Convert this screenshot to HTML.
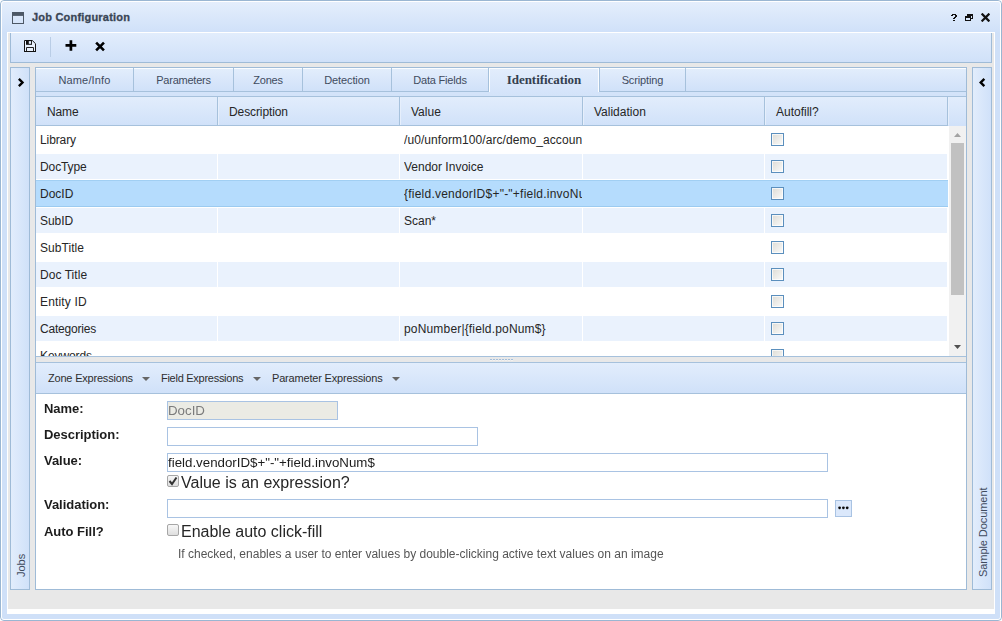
<!DOCTYPE html>
<html>
<head>
<meta charset="utf-8">
<title>Job Configuration</title>
<style>
*{box-sizing:border-box;margin:0;padding:0}
html,body{width:1002px;height:621px;overflow:hidden;background:#fff;font-family:"Liberation Sans",sans-serif;font-size:12px;color:#222}
div,svg{position:absolute}
.g{background:linear-gradient(#e2edfc,#d0e1f9)}
.t{white-space:nowrap;color:#2a2a2a}
.tab{top:68px;height:23px;line-height:25px;text-align:center;font-size:11px;color:#3f4b5e;white-space:nowrap}
.ts{top:68px;width:1px;height:23px;background:#a6c1dc}
.ch{top:97px;height:28px;line-height:31px;font-size:12px;color:#262626;white-space:nowrap}
.cs{top:97px;width:1px;height:28px;background:#a6c1dc}
.cw{top:97px;width:1px;height:28px;background:#e6effc}
.row{left:36px;width:912px;height:27px;background:#fff}
.alt{background:#eaf2fd;border-top:1px solid #fff;border-bottom:1px solid #fff;width:911px}
.sel{background:#b5dcfd;border-top:1px solid #a1cff3;border-bottom:1px solid #9ccbf0}
.c{top:0;height:27px;line-height:29px;font-size:12px;color:#262626;white-space:nowrap;overflow:hidden}
.alt .c,.sel .c{top:-1px}
.v{top:0;width:1px;height:27px;background:#fff}
.alt .v{top:-1px}
.cb{left:735px;top:7px;width:13px;height:13px;border:1px solid #5b8fbd;background:linear-gradient(135deg,#dddcd6,#fbfbfa);box-shadow:inset 0 0 0 1px rgba(255,255,255,.7)}
.alt .cb,.sel .cb{top:6px}
.lbl{will-change:transform;left:44px;font-weight:bold;font-size:13px;letter-spacing:-0.03px;color:#1c1c1c;white-space:nowrap;line-height:15px}
.inp{will-change:transform;height:19px;border:1px solid #a9c3e3;background:#fff;font-size:13.3px;line-height:17px;padding-left:0;color:#1c1c1c;white-space:nowrap;overflow:hidden}
.big{will-change:transform;font-size:16px;color:#262626;white-space:nowrap;line-height:18px}
.ck{width:12px;height:12px;border:1px solid #a6a6a6;border-radius:2px;background:linear-gradient(#f7f7f7,#dedede)}
.bt{font-size:11px;letter-spacing:-0.27px;top:371px;line-height:14px;color:#2e2e2e;white-space:nowrap}
.ar{top:377px}
</style>
</head>
<body>
<div style="left:0;top:0;width:1002px;height:621px;border:1px solid #9ab6d2;border-radius:4px;background:linear-gradient(#e4eefc 1px,#d0e1f9 31px,#cfe0f8 32px)"></div>
<div style="left:1px;top:1px;width:1000px;height:619px;border:1px solid #fff;border-radius:3px"></div>
<svg style="left:12px;top:12px" width="12" height="12" viewBox="0 0 12 12"><rect x="0.5" y="0.5" width="11" height="11" fill="none" stroke="#4d5866"/><rect x="0" y="0" width="12" height="3.9" fill="#4d5866"/></svg>
<div class="t" style="left:32px;top:10px;font:bold 11px/14px 'Liberation Sans',sans-serif;color:#3a4656;-webkit-text-stroke:0.3px #3a4656;letter-spacing:.2px">Job Configuration</div>
<svg style="left:951px;top:14px" width="6" height="7" viewBox="0 0 6 7" shape-rendering="crispEdges"><path d="M1 0h4v1h1v2h-1v1h-1v1h-2v-1h1v-1h1v-2h-2v1h-2v-1h1z M2 6h2v1h-2z" fill="#111"/></svg>
<svg style="left:965px;top:14px" width="8" height="7" viewBox="0 0 8 7" shape-rendering="crispEdges"><path d="M2 0h6v2h-6z M7 2h1v3h-1z M6 4h2v1h-2z M0 2h6v2h-6z M0 4h1v3h-1z M5 4h1v3h-1z M0 6h6v1h-6z" fill="#111"/></svg>
<svg style="left:981px;top:13px" width="9" height="9" viewBox="0 0 9 9"><path d="M1.4 1.4L7.6 7.6M7.6 1.4L1.4 7.6" stroke="#111" stroke-width="2.2" stroke-linecap="square"/></svg>
<div style="left:7px;top:32px;width:988px;height:582px;background:#fff"></div>
<div style="left:8px;top:33px;width:986px;height:576px;background:#e8e8e8"></div>
<div class="g" style="left:10px;top:33px;width:982px;height:30px;border:1px solid #9fbbd7;border-top:0"></div>
<svg style="left:24px;top:40px" width="12" height="12" viewBox="0 0 12 12"><path d="M0.5 0.5H8.3L11.5 3.7V11.5H0.5Z" fill="#e9f1fd" stroke="#151515" stroke-width="1"/><rect x="2" y="0" width="6" height="4.8" fill="#111"/><rect x="4.8" y="1.1" width="2.3" height="2.7" fill="#e6effc"/><path d="M2.5 11.5V7.5H9.5V11.5" fill="none" stroke="#222" stroke-width="1"/><path d="M0 11.5H12" stroke="#111" stroke-width="1"/></svg>
<div style="left:50px;top:37px;width:1px;height:20px;background:#b9cde6"></div>
<svg style="left:65px;top:40px" width="12" height="12" viewBox="0 0 12 12"><path d="M5.9 0.2V10.7M0.5 5.45H11.3" stroke="#000" stroke-width="2.7"/></svg>
<svg style="left:95px;top:41px" width="11" height="11" viewBox="0 0 11 11"><path d="M1.15 1.6L8.95 9.4M8.95 1.6L1.15 9.4" stroke="#000" stroke-width="2.6"/></svg>
<div style="left:10px;top:67px;width:20px;height:523px;border:1px solid #9fbbd7;background:linear-gradient(90deg,#e2edfc,#d0e1f9)"></div>
<svg style="left:18px;top:78px" width="7" height="9" viewBox="0 0 7 9"><path d="M0.85 0.85L4.5 4.5L0.85 8.15" fill="none" stroke="#000" stroke-width="2.4"/></svg>
<div class="t" style="left:14px;top:577px;font-size:11px;line-height:14px;height:14px;color:#3f4b5e;transform:rotate(-90deg);transform-origin:0 0">Jobs</div>
<div style="left:972px;top:67px;width:20px;height:523px;border:1px solid #9fbbd7;background:linear-gradient(90deg,#e2edfc,#d0e1f9)"></div>
<svg style="left:979px;top:78px" width="7" height="9" viewBox="0 0 7 9"><path d="M5.35 0.85L1.7 4.5L5.35 8.15" fill="none" stroke="#000" stroke-width="2.4"/></svg>
<div class="t" style="left:976px;top:577px;font-size:11px;letter-spacing:-0.07px;line-height:14px;height:14px;color:#3f4b5e;transform:rotate(-90deg);transform-origin:0 0">Sample Document</div>
<div style="left:35px;top:67px;width:932px;height:523px;border:1px solid #9fbbd7;background:#fff"></div>
<div class="g" style="left:36px;top:68px;width:930px;height:23px;border-top:1px solid #fbfdff"></div>
<div style="left:36px;top:91px;width:930px;height:1px;background:#a6c1dc"></div>
<div style="left:36px;top:92px;width:930px;height:4px;background:#d3e3f9"></div>
<div style="left:36px;top:96px;width:930px;height:1px;background:#a6c1dc"></div>
<div class="tab" style="left:36px;width:97px;letter-spacing:0.15px">Name/Info</div>
<div class="ts" style="left:133px"></div>
<div class="tab" style="left:134px;width:99px;letter-spacing:-0.22px">Parameters</div>
<div class="ts" style="left:233px"></div>
<div class="tab" style="left:234px;width:68px;letter-spacing:-0.25px">Zones</div>
<div class="ts" style="left:302px"></div>
<div class="tab" style="left:303px;width:88px;letter-spacing:-0.12px">Detection</div>
<div class="ts" style="left:391px"></div>
<div class="tab" style="left:392px;width:96px;letter-spacing:-0.20px">Data Fields</div>
<div style="left:489px;top:68px;width:110px;height:28px;background:linear-gradient(#e2edfc,#d5e4fa 23px,#d3e3f9);border-top:1px solid #fbfdff"></div>
<div style="left:488px;top:68px;width:1px;height:24px;background:#a6c1dc"></div>
<div style="left:489px;top:68px;width:1px;height:24px;background:#fbfdff"></div>
<div class="tab" style="left:489px;width:110px;font:bold 13px/23px 'Liberation Serif',serif;color:#343f4f;letter-spacing:-0.05px">Identification</div>
<div style="left:598px;top:68px;width:1px;height:24px;background:#fbfdff"></div>
<div style="left:599px;top:68px;width:1px;height:24px;background:#a6c1dc"></div>
<div class="tab" style="left:600px;width:85px;letter-spacing:-0.12px">Scripting</div>
<div class="ts" style="left:685px"></div>
<div class="g" style="left:36px;top:97px;width:930px;height:29px"></div>
<div style="left:36px;top:125px;width:912px;height:1px;background:#a6c1dc"></div>
<div class="ch" style="left:47px;letter-spacing:-0.15px">Name</div>
<div class="cs" style="left:217px"></div>
<div class="cw" style="left:218px"></div>
<div class="ch" style="left:229px;letter-spacing:-0.10px">Description</div>
<div class="cs" style="left:399px"></div>
<div class="cw" style="left:400px"></div>
<div class="ch" style="left:411px;letter-spacing:0.00px">Value</div>
<div class="cs" style="left:582px"></div>
<div class="cw" style="left:583px"></div>
<div class="ch" style="left:594px;letter-spacing:0.00px">Validation</div>
<div class="cs" style="left:764px"></div>
<div class="cw" style="left:765px"></div>
<div class="ch" style="left:776px;letter-spacing:0.00px">Autofill?</div>
<div class="cs" style="left:947px"></div>
<div class="cw" style="left:948px"></div>
<div style="left:36px;top:126px;width:930px;height:230px;overflow:hidden;background:#fff">
<div class="row " style="left:0;top:0px"><div class="c" style="left:4px;width:177px;letter-spacing:-0.10px">Library</div><div class="c" style="left:368px;width:178px;letter-spacing:0.07px">/u0/unform100/arc/demo_accounting</div><div class="v" style="left:181px"></div><div class="v" style="left:363px"></div><div class="v" style="left:546px"></div><div class="v" style="left:728px"></div><div class="cb"></div></div>
<div class="row alt" style="left:0;top:27px"><div class="c" style="left:4px;width:177px;letter-spacing:-0.10px">DocType</div><div class="c" style="left:368px;width:178px;letter-spacing:0.00px">Vendor Invoice</div><div class="v" style="left:181px"></div><div class="v" style="left:363px"></div><div class="v" style="left:546px"></div><div class="v" style="left:728px"></div><div class="cb"></div></div>
<div class="row sel" style="left:0;top:54px"><div class="c" style="left:4px;width:177px;letter-spacing:0.00px">DocID</div><div class="c" style="left:368px;width:178px;letter-spacing:0.23px">{field.vendorID$+&quot;-&quot;+field.invoNum$}</div><div class="cb"></div></div>
<div class="row alt" style="left:0;top:81px"><div class="c" style="left:4px;width:177px;letter-spacing:-0.05px">SubID</div><div class="c" style="left:368px;width:178px;letter-spacing:0.00px">Scan*</div><div class="v" style="left:181px"></div><div class="v" style="left:363px"></div><div class="v" style="left:546px"></div><div class="v" style="left:728px"></div><div class="cb"></div></div>
<div class="row " style="left:0;top:108px"><div class="c" style="left:4px;width:177px;letter-spacing:0.05px">SubTitle</div><div class="c" style="left:368px;width:178px;letter-spacing:0.00px"></div><div class="v" style="left:181px"></div><div class="v" style="left:363px"></div><div class="v" style="left:546px"></div><div class="v" style="left:728px"></div><div class="cb"></div></div>
<div class="row alt" style="left:0;top:135px"><div class="c" style="left:4px;width:177px;letter-spacing:0.05px">Doc Title</div><div class="c" style="left:368px;width:178px;letter-spacing:0.00px"></div><div class="v" style="left:181px"></div><div class="v" style="left:363px"></div><div class="v" style="left:546px"></div><div class="v" style="left:728px"></div><div class="cb"></div></div>
<div class="row " style="left:0;top:162px"><div class="c" style="left:4px;width:177px;letter-spacing:0.15px">Entity ID</div><div class="c" style="left:368px;width:178px;letter-spacing:0.00px"></div><div class="v" style="left:181px"></div><div class="v" style="left:363px"></div><div class="v" style="left:546px"></div><div class="v" style="left:728px"></div><div class="cb"></div></div>
<div class="row alt" style="left:0;top:189px"><div class="c" style="left:4px;width:177px;letter-spacing:-0.20px">Categories</div><div class="c" style="left:368px;width:178px;letter-spacing:0.17px">poNumber|{field.poNum$}</div><div class="v" style="left:181px"></div><div class="v" style="left:363px"></div><div class="v" style="left:546px"></div><div class="v" style="left:728px"></div><div class="cb"></div></div>
<div class="row " style="left:0;top:216px"><div class="c" style="left:4px;width:177px;letter-spacing:-0.10px">Keywords</div><div class="c" style="left:368px;width:178px;letter-spacing:0.00px"></div><div class="v" style="left:181px"></div><div class="v" style="left:363px"></div><div class="v" style="left:546px"></div><div class="v" style="left:728px"></div><div class="cb"></div></div>
<div style="left:913px;top:0;width:17px;height:230px;background:#f1f1f1"></div>
<div style="left:915px;top:17px;width:13px;height:152px;background:#c1c1c1"></div>
<svg style="left:918px;top:7px" width="7" height="4" viewBox="0 0 7 4"><path d="M0 4L3.5 0L7 4z" fill="#a3a3a3"/></svg>
<svg style="left:918px;top:219px" width="7" height="4" viewBox="0 0 7 4"><path d="M0 0L3.5 4L7 0z" fill="#505050"/></svg>
</div>
<div style="left:36px;top:356px;width:930px;height:7px;background:#e8e8e8;border-top:1px solid #a6c1dc;border-bottom:1px solid #a6c1dc"></div>
<div style="left:490px;top:359px;width:2px;height:1px;background:#a3bedb"></div>
<div style="left:490px;top:360px;width:2px;height:1px;background:#f3f1ef"></div>
<div style="left:493px;top:359px;width:2px;height:1px;background:#a3bedb"></div>
<div style="left:493px;top:360px;width:2px;height:1px;background:#f3f1ef"></div>
<div style="left:496px;top:359px;width:2px;height:1px;background:#a3bedb"></div>
<div style="left:496px;top:360px;width:2px;height:1px;background:#f3f1ef"></div>
<div style="left:499px;top:359px;width:2px;height:1px;background:#a3bedb"></div>
<div style="left:499px;top:360px;width:2px;height:1px;background:#f3f1ef"></div>
<div style="left:502px;top:359px;width:2px;height:1px;background:#a3bedb"></div>
<div style="left:502px;top:360px;width:2px;height:1px;background:#f3f1ef"></div>
<div style="left:505px;top:359px;width:2px;height:1px;background:#a3bedb"></div>
<div style="left:505px;top:360px;width:2px;height:1px;background:#f3f1ef"></div>
<div style="left:508px;top:359px;width:2px;height:1px;background:#a3bedb"></div>
<div style="left:508px;top:360px;width:2px;height:1px;background:#f3f1ef"></div>
<div style="left:511px;top:359px;width:2px;height:1px;background:#a3bedb"></div>
<div style="left:511px;top:360px;width:2px;height:1px;background:#f3f1ef"></div>
<div class="g" style="left:36px;top:363px;width:930px;height:31px;border-bottom:1px solid #a6c1dc"></div>
<div class="bt" style="left:48px;letter-spacing:-0.20px">Zone Expressions</div>
<svg class="ar" style="left:142px" width="8" height="4" viewBox="0 0 8 4"><path d="M0 0h8L4 4z" fill="#666"/></svg>
<div class="bt" style="left:161px;letter-spacing:-0.27px">Field Expressions</div>
<svg class="ar" style="left:253px" width="8" height="4" viewBox="0 0 8 4"><path d="M0 0h8L4 4z" fill="#666"/></svg>
<div class="bt" style="left:272px;letter-spacing:-0.18px">Parameter Expressions</div>
<svg class="ar" style="left:392px" width="8" height="4" viewBox="0 0 8 4"><path d="M0 0h8L4 4z" fill="#666"/></svg>
<div class="lbl" style="top:401px">Name:</div>
<div class="inp" style="left:167px;top:401px;width:171px;background:#ebebe4;color:#7b7b7b">DocID</div>
<div class="lbl" style="top:427px">Description:</div>
<div class="inp" style="left:167px;top:427px;width:311px"></div>
<div class="lbl" style="top:453px">Value:</div>
<div class="inp" style="left:167px;top:453px;width:661px">field.vendorID$+&quot;-&quot;+field.invoNum$</div>
<div class="ck" style="left:167px;top:475px"><svg style="left:0;top:0" width="10" height="10" viewBox="0 0 10 10"><path d="M1.5 5L4 8L8.5 1.5" fill="none" stroke="#333" stroke-width="2"/></svg></div>
<div class="big" style="left:181px;top:474px">Value is an expression?</div>
<div class="lbl" style="top:497px">Validation:</div>
<div class="inp" style="left:167px;top:499px;width:661px"></div>
<div style="left:835px;top:500px;width:17px;height:17px;border:1px solid #a9c3e3;background:#dbe8fb"></div>
<svg style="left:835px;top:500px" width="17" height="17" viewBox="0 0 17 17"><circle cx="4.6" cy="7.8" r="1.4" fill="#0a0a0a"/><circle cx="8.4" cy="7.8" r="1.4" fill="#0a0a0a"/><circle cx="12.2" cy="7.8" r="1.4" fill="#0a0a0a"/></svg>
<div class="lbl" style="top:524px">Auto Fill?</div>
<div class="ck" style="left:167px;top:524px"></div>
<div class="big" style="left:181px;top:523px">Enable auto click-fill</div>
<div class="t" style="will-change:transform;left:178px;top:547px;font-size:12px;line-height:14px;color:#555">If checked, enables a user to enter values by double-clicking active text values on an image</div>
</body>
</html>
